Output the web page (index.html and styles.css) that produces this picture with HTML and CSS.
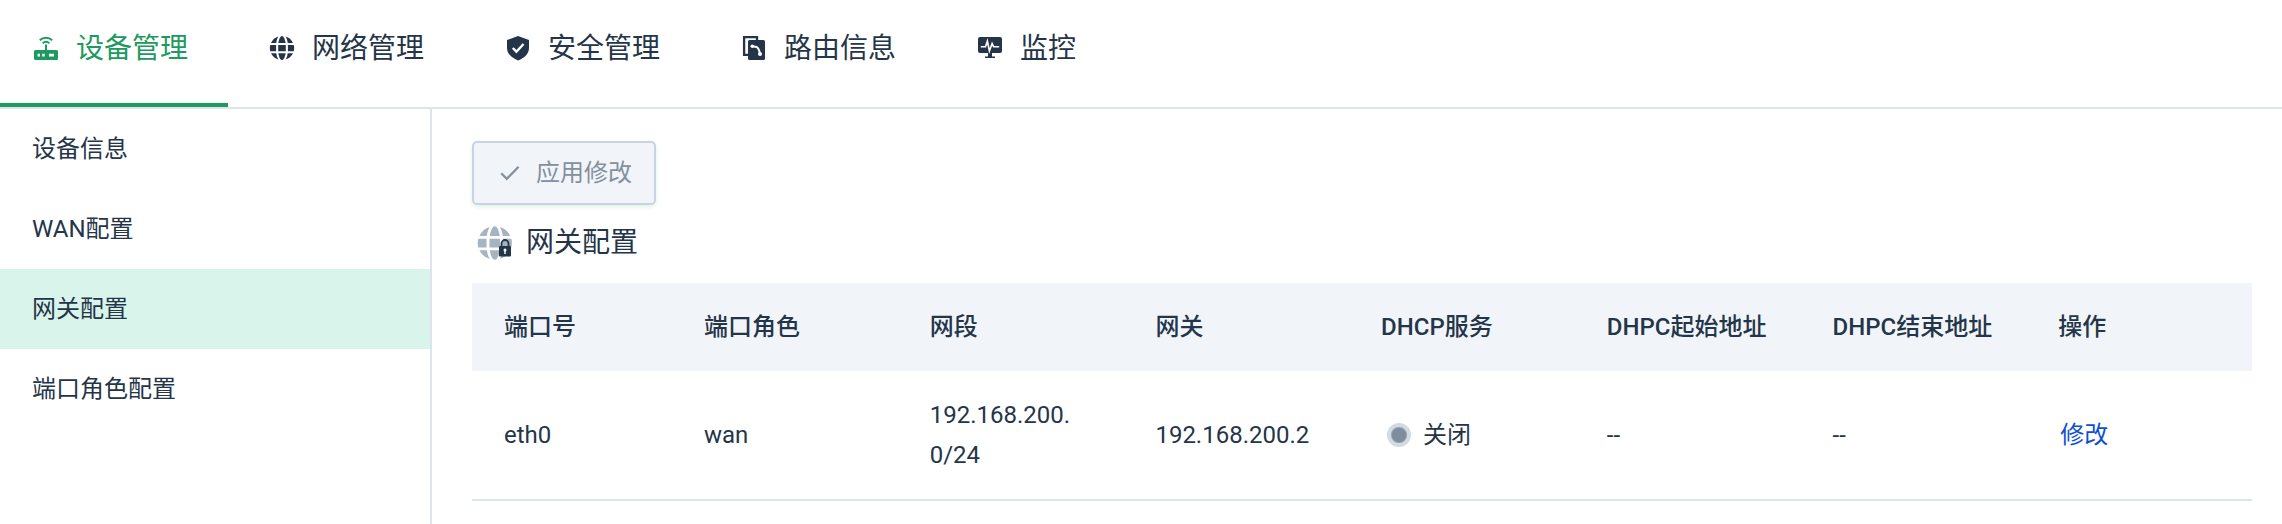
FILE: index.html
```html
<!DOCTYPE html>
<html lang="zh-CN">
<head>
<meta charset="utf-8">
<title>网关配置</title>
<link rel="stylesheet" href="styles.css">
</head>
<body>
<nav class="tabs">
  <a class="tab active">
    <svg class="tab-icon" viewBox="0 0 28 28"><g fill="none" stroke="currentColor" stroke-width="2"><path d="M7.800 8.200a9.100 9.100 0 0 1 12.400 0M10.700 11.200a5 5 0 0 1 6.600 0"/><path d="M14 12.500v6"/></g><path fill="currentColor" fill-rule="evenodd" d="M3.500 18h21a1.500 1.500 0 0 1 1.500 1.500v7a1.500 1.500 0 0 1-1.500 1.500h-21A1.500 1.500 0 0 1 2 26.500v-7A1.500 1.500 0 0 1 3.500 18zm2 3.800v2.700H8v-2.700zm4.700 0v2.700h2.500v-2.700zm6.800 0v2.700h5v-2.700z"/></svg>
    <span>设备管理</span>
  </a>
  <a class="tab">
    <svg class="tab-icon" viewBox="0 0 28 28"><use href="#globe"/></svg>
    <span>网络管理</span>
  </a>
  <a class="tab">
    <svg class="tab-icon" viewBox="0 0 28 28"><path fill="currentColor" d="M14 4l11 4v8c0 5.500-4.500 10-11 12.500C7.500 26 3 21.500 3 16V8z"/><path d="M8.800 16l3.600 3.700L19.500 12" fill="none" stroke="#fff" stroke-width="2.400"/></svg>
    <span>安全管理</span>
  </a>
  <a class="tab">
    <svg class="tab-icon" viewBox="0 0 28 28"><path d="M8.500 22.800H4.100V5.200H17V8" fill="none" stroke="currentColor" stroke-width="2.300"/><rect x="8" y="8" width="17" height="20" rx="1.500" fill="currentColor"/><path d="M12.500 14.300l4 .7c1.800.5 2.700 3 3.500 6.500" fill="none" stroke="#fff" stroke-width="2"/><circle cx="12.300" cy="14.300" r="1.800" fill="#fff"/><circle cx="20" cy="22" r="2" fill="#fff"/></svg>
    <span>路由信息</span>
  </a>
  <a class="tab">
    <svg class="tab-icon" viewBox="0 0 28 28"><path fill="currentColor" d="M4 5h20a2 2 0 0 1 2 2v12a2 2 0 0 1-2 2h-8v3.500h3V26H9v-1.500h3V21H4a2 2 0 0 1-2-2V7a2 2 0 0 1 2-2z"/><path d="M4.800 14.700h4.700l1.900-5.700 2 10 2.700-7.400 1.500 3.100h5.600" fill="none" stroke="#fff" stroke-width="1.600"/></svg>
    <span>监控</span>
  </a>
</nav>
<div class="layout">
  <aside class="sidebar">
    <a class="side-item">设备信息</a>
    <a class="side-item">WAN配置</a>
    <a class="side-item selected">网关配置</a>
    <a class="side-item">端口角色配置</a>
  </aside>
  <main class="content">
    <button class="apply" disabled>
      <svg class="check" viewBox="0 0 20 16"><path d="M1.200 8.200l5.600 5.600L18.600 1.800" fill="none" stroke="currentColor" stroke-width="2.300"/></svg>
      <span>应用修改</span>
    </button>
    <h2 class="title">
      <svg class="title-icon" viewBox="0 0 36 36"><g fill="#a6b4c1" transform="translate(-1.800 -4.400) scale(1.400)"><use href="#globe"/></g><path d="M24.500 23v-4.500a3.500 3.500 0 0 1 7 0V23" fill="#a6b4c1" stroke="#253549" stroke-width="1.800"/><rect x="22" y="21" width="12" height="10.500" rx="1" fill="#253549"/><path d="M28 25v4" stroke="#fff" stroke-width="1.400"/><circle cx="28" cy="25" r="1.500" fill="#fff"/></svg>
      <span>网关配置</span>
    </h2>
    <table class="table">
      <colgroup><col class="port"><col><col><col><col><col><col><col></colgroup>
      <thead>
        <tr><th>端口号</th><th>端口角色</th><th>网段</th><th>网关</th><th>DHCP服务</th><th>DHPC起始地址</th><th>DHPC结束地址</th><th>操作</th></tr>
      </thead>
      <tbody>
        <tr>
          <td>eth0</td><td>wan</td><td class="segment">192.168.200.0/24</td><td>192.168.200.2</td>
          <td><span class="status"><i class="dot"></i>关闭</span></td>
          <td>--</td><td>--</td><td><a class="edit">修改</a></td>
        </tr>
      </tbody>
    </table>
  </main>
</div>
<svg class="defs" width="0" height="0">
  <defs>
    <g id="globe">
      <path d="M10.200 13h7.600v6.200h-7.600zM2.200 13h5.900v6.200H2.200a12 12 0 0 1 0-6.200zM19.900 13h5.900a12 12 0 0 1 0 6.200h-5.900zM10.400 11C11 7 12.400 4 14 4s3 3 3.600 7zM10.400 21.200C11 25.200 12.400 28 14 28s3-2.800 3.600-6.800zM3 11a12 12 0 0 1 7.400-6.400C9.300 6.300 8.600 8.500 8.300 11zM25 11a12 12 0 0 0-7.400-6.400c1.100 1.700 1.800 3.900 2.100 6.400zM3 21.200a12 12 0 0 0 7.400 6.200c-1.100-1.700-1.800-3.700-2.100-6.200zM25 21.200a12 12 0 0 1-7.400 6.200c1.100-1.700 1.800-3.700 2.100-6.200z"/>
    </g>
  </defs>
</svg>
</body>
</html>
```

FILE: styles.css
```css
* { box-sizing: border-box; }
body {
  margin: 0;
  height: 524px;
  overflow: hidden;
  display: flex;
  flex-direction: column;
  background: #fff;
  color: #253549;
  font: 24px/40px Roboto, "Noto Sans CJK SC", sans-serif;
}
.defs { display: none; }
.tabs {
  display: flex;
  gap: 8px;
  height: 109px;
  flex: none;
  border-bottom: 2px solid #dce5ed;
}
.tab {
  display: flex;
  align-items: center;
  gap: 16px;
  padding: 0 40px 5px 32px;
  border-bottom: 4px solid transparent;
  font-size: 28px;
}
.tab.active { color: #1c9a60; border-color: #1c9a60; }
.tab-icon { width: 28px; height: 28px; margin-bottom: 6px; fill: currentColor; overflow: visible; }
.layout { display: flex; flex: 1; min-height: 0; }
.sidebar { width: 432px; flex: none; border-right: 2px solid #dce5ed; }
.side-item { display: block; height: 80px; padding: 20px 32px; }
.side-item.selected { background: #d9f4ea; }
.content { flex: 1; padding: 32px 30px 0 40px; }
.apply {
  display: flex;
  align-items: center;
  gap: 16px;
  width: 184px;
  height: 64px;
  padding: 0 0 0 26px;
  border: 2px solid #c9d4e0;
  border-radius: 5px;
  background: #f1f5fa;
  box-shadow: 0 2px 4px rgba(28, 154, 96, .14);
  color: #84909d;
  font: inherit;
}
.check { width: 20px; height: 16px; }
.title {
  display: flex;
  align-items: center;
  gap: 13px;
  height: 78px;
  margin: 0;
  padding: 0 0 2px 5px;
  font-size: 28px;
  font-weight: 400;
}
.title-icon { width: 36px; height: 36px; }
.table {
  width: 100%;
  border-collapse: separate;
  border-spacing: 0;
  table-layout: fixed;
}
.port { width: 200px; }
th {
  height: 88px;
  padding: 0 0 0 32px;
  background: #f1f5fa;
  text-align: left;
  font-weight: 500;
  white-space: nowrap;
}
td {
  height: 130px;
  padding: 0 32px;
  border-bottom: 2px solid #dce5ed;
  white-space: nowrap;
}
.segment { white-space: normal; word-break: break-all; }
.status { display: flex; align-items: center; gap: 12px; padding-left: 6px; }
.dot {
  width: 24px;
  height: 24px;
  border: 4px solid #d2dae2;
  border-radius: 50%;
  background: #7f8d9c;
  box-shadow: inset 0 0 0 1px #94a1ae;
}
.edit { padding-left: 2px; color: #0f50d3; }
```
